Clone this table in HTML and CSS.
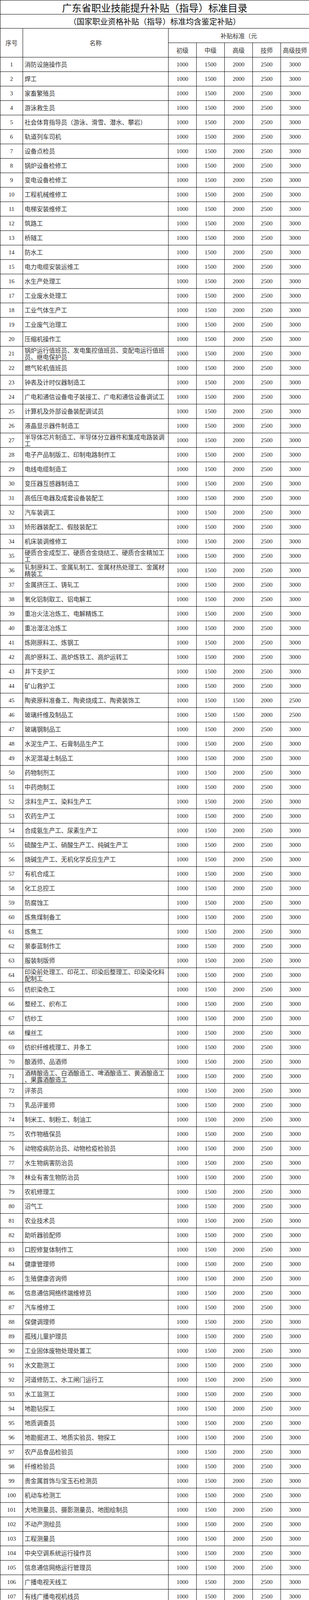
FILE: index.html
```html
<!DOCTYPE html>
<html lang="zh-CN">
<head>
<meta charset="utf-8">
<meta name="viewport" content="width=792, initial-scale=1">
<title>广东省职业技能提升补贴（指导）标准目录</title>
<link rel="stylesheet" href="styles.css">
</head>
<body>
<table class="sheet">
<colgroup><col class="c-no"><col class="c-name"><col class="c-v"><col class="c-v"><col class="c-v"><col class="c-v"><col class="c-last"></colgroup>
<tr class="title"><td colspan="7">广东省职业技能提升补贴（指导）标准目录</td></tr>
<tr class="subtitle"><td colspan="7">（国家职业资格补贴（指导）标准均含鉴定补贴）</td></tr>
<tr class="head"><td rowspan="2">序号</td><td rowspan="2">名称</td><td colspan="5">补贴标准（元</td></tr>
<tr class="head"><td>初级</td><td>中级</td><td>高级</td><td>技师</td><td>高级技师</td></tr>
<tr><td>1</td><td class="n">消防设施操作员</td><td>1000</td><td>1500</td><td>2000</td><td>2500</td><td>3000</td></tr>
<tr><td>2</td><td class="n">焊工</td><td>1000</td><td>1500</td><td>2000</td><td>2500</td><td>3000</td></tr>
<tr><td>3</td><td class="n">家畜繁殖员</td><td>1000</td><td>1500</td><td>2000</td><td>2500</td><td>3000</td></tr>
<tr><td>4</td><td class="n">游泳救生员</td><td>1000</td><td>1500</td><td>2000</td><td>2500</td><td>3000</td></tr>
<tr><td>5</td><td class="n">社会体育指导员（游泳、滑雪、潜水、攀岩）</td><td>1000</td><td>1500</td><td>2000</td><td>2500</td><td>3000</td></tr>
<tr><td>6</td><td class="n">轨道列车司机</td><td>1000</td><td>1500</td><td>2000</td><td>2500</td><td>3000</td></tr>
<tr><td>7</td><td class="n">设备点检员</td><td>1000</td><td>1500</td><td>2000</td><td>2500</td><td>3000</td></tr>
<tr><td>8</td><td class="n">锅炉设备检修工</td><td>1000</td><td>1500</td><td>2000</td><td>2500</td><td>3000</td></tr>
<tr><td>9</td><td class="n">变电设备检修工</td><td>1000</td><td>1500</td><td>2000</td><td>2500</td><td>3000</td></tr>
<tr><td>10</td><td class="n">工程机械维修工</td><td>1000</td><td>1500</td><td>2000</td><td>2500</td><td>3000</td></tr>
<tr><td>11</td><td class="n">电梯安装维修工</td><td>1000</td><td>1500</td><td>2000</td><td>2500</td><td>3000</td></tr>
<tr><td>12</td><td class="n">筑路工</td><td>1000</td><td>1500</td><td>2000</td><td>2500</td><td>3000</td></tr>
<tr><td>13</td><td class="n">桥隧工</td><td>1000</td><td>1500</td><td>2000</td><td>2500</td><td>3000</td></tr>
<tr><td>14</td><td class="n">防水工</td><td>1000</td><td>1500</td><td>2000</td><td>2500</td><td>3000</td></tr>
<tr><td>15</td><td class="n">电力电缆安装运维工</td><td>1000</td><td>1500</td><td>2000</td><td>2500</td><td>3000</td></tr>
<tr><td>16</td><td class="n">水生产处理工</td><td>1000</td><td>1500</td><td>2000</td><td>2500</td><td>3000</td></tr>
<tr><td>17</td><td class="n">工业废水处理工</td><td>1000</td><td>1500</td><td>2000</td><td>2500</td><td>3000</td></tr>
<tr><td>18</td><td class="n">工业气体生产工</td><td>1000</td><td>1500</td><td>2000</td><td>2500</td><td>3000</td></tr>
<tr><td>19</td><td class="n">工业废气治理工</td><td>1000</td><td>1500</td><td>2000</td><td>2500</td><td>3000</td></tr>
<tr><td>20</td><td class="n">压缩机操作工</td><td>1000</td><td>1500</td><td>2000</td><td>2500</td><td>3000</td></tr>
<tr><td>21</td><td class="n">锅炉运行值班员、发电集控值班员、变配电运行值班<br>员、继电保护员</td><td>1000</td><td>1500</td><td>2000</td><td>2500</td><td>3000</td></tr>
<tr><td>22</td><td class="n">燃气轮机值班员</td><td>1000</td><td>1500</td><td>2000</td><td>2500</td><td>3000</td></tr>
<tr><td>23</td><td class="n">钟表及计时仪器制造工</td><td>1000</td><td>1500</td><td>2000</td><td>2500</td><td>3000</td></tr>
<tr><td>24</td><td class="n">广电和通信设备电子装接工、广电和通信设备调试工</td><td>1000</td><td>1500</td><td>2000</td><td>2500</td><td>3000</td></tr>
<tr><td>25</td><td class="n">计算机及外部设备装配调试员</td><td>1000</td><td>1500</td><td>2000</td><td>2500</td><td>3000</td></tr>
<tr><td>26</td><td class="n">液晶显示器件制造工</td><td>1000</td><td>1500</td><td>2000</td><td>2500</td><td>3000</td></tr>
<tr><td>27</td><td class="n">半导体芯片制造工、半导体分立器件和集成电路装调<br>工</td><td>1000</td><td>1500</td><td>2000</td><td>2500</td><td>3000</td></tr>
<tr><td>28</td><td class="n">电子产品制版工、印制电路制作工</td><td>1000</td><td>1500</td><td>2000</td><td>2500</td><td>3000</td></tr>
<tr><td>29</td><td class="n">电线电缆制造工</td><td>1000</td><td>1500</td><td>2000</td><td>2500</td><td>3000</td></tr>
<tr><td>30</td><td class="n">变压器互感器制造工</td><td>1000</td><td>1500</td><td>2000</td><td>2500</td><td>3000</td></tr>
<tr><td>31</td><td class="n">高低压电器及成套设备装配工</td><td>1000</td><td>1500</td><td>2000</td><td>2500</td><td>3000</td></tr>
<tr><td>32</td><td class="n">汽车装调工</td><td>1000</td><td>1500</td><td>2000</td><td>2500</td><td>3000</td></tr>
<tr><td>33</td><td class="n">矫形器装配工、假肢装配工</td><td>1000</td><td>1500</td><td>2000</td><td>2500</td><td>3000</td></tr>
<tr><td>34</td><td class="n">机床装调维修工</td><td>1000</td><td>1500</td><td>2000</td><td>2500</td><td>3000</td></tr>
<tr><td>35</td><td class="n">硬质合金成型工、硬质合金烧结工、硬质合金精加工<br>工</td><td>1000</td><td>1500</td><td>2000</td><td>2500</td><td>3000</td></tr>
<tr><td>36</td><td class="n">轧制原料工、金属轧制工、金属材热处理工、金属材<br>精装工</td><td>1000</td><td>1500</td><td>2000</td><td>2500</td><td>3000</td></tr>
<tr><td>37</td><td class="n">金属挤压工、铸轧工</td><td>1000</td><td>1500</td><td>2000</td><td>2500</td><td>3000</td></tr>
<tr><td>38</td><td class="n">氧化铝制取工、铝电解工</td><td>1000</td><td>1500</td><td>2000</td><td>2500</td><td>3000</td></tr>
<tr><td>39</td><td class="n">重冶火法冶炼工、电解精炼工</td><td>1000</td><td>1500</td><td>2000</td><td>2500</td><td>3000</td></tr>
<tr><td>40</td><td class="n">重冶湿法冶炼工</td><td>1000</td><td>1500</td><td>2000</td><td>2500</td><td>3000</td></tr>
<tr><td>41</td><td class="n">炼刚原料工、炼钢工</td><td>1000</td><td>1500</td><td>2000</td><td>2500</td><td>3000</td></tr>
<tr><td>42</td><td class="n">高炉原料工、高炉炼铁工、高炉运转工</td><td>1000</td><td>1500</td><td>2000</td><td>2500</td><td>3000</td></tr>
<tr><td>43</td><td class="n">井下支护工</td><td>1000</td><td>1500</td><td>2000</td><td>2500</td><td>3000</td></tr>
<tr><td>44</td><td class="n">矿山救护工</td><td>1000</td><td>1500</td><td>2000</td><td>2500</td><td>3000</td></tr>
<tr><td>45</td><td class="n">陶瓷原料准备工、陶瓷烧成工、陶瓷装饰工</td><td>1000</td><td>1500</td><td>1500</td><td>2000</td><td>2500</td></tr>
<tr><td>46</td><td class="n">玻璃纤维及制品工</td><td>1000</td><td>1500</td><td>1500</td><td>2000</td><td>2500</td></tr>
<tr><td>47</td><td class="n">玻璃钢制品工</td><td>1000</td><td>1500</td><td>2000</td><td>2500</td><td>3000</td></tr>
<tr><td>48</td><td class="n">水泥生产工、石膏制品生产工</td><td>1000</td><td>1500</td><td>2000</td><td>2500</td><td>3000</td></tr>
<tr><td>49</td><td class="n">水泥混凝土制品工</td><td>1000</td><td>1500</td><td>2000</td><td>2500</td><td>3000</td></tr>
<tr><td>50</td><td class="n">药物制剂工</td><td>1000</td><td>1500</td><td>2000</td><td>2500</td><td>3000</td></tr>
<tr><td>51</td><td class="n">中药炮制工</td><td>1000</td><td>1500</td><td>2000</td><td>2500</td><td>3000</td></tr>
<tr><td>52</td><td class="n">涂料生产工、染料生产工</td><td>1000</td><td>1500</td><td>2000</td><td>2500</td><td>3000</td></tr>
<tr><td>53</td><td class="n">农药生产工</td><td>1000</td><td>1500</td><td>2000</td><td>2500</td><td>3000</td></tr>
<tr><td>54</td><td class="n">合成氨生产工、尿素生产工</td><td>1000</td><td>1500</td><td>2000</td><td>2500</td><td>3000</td></tr>
<tr><td>55</td><td class="n">硫酸生产工、硝酸生产工、纯碱生产工</td><td>1000</td><td>1500</td><td>2000</td><td>2500</td><td>3000</td></tr>
<tr><td>56</td><td class="n">烧碱生产工、无机化学反应生产工</td><td>1000</td><td>1500</td><td>2000</td><td>2500</td><td>3000</td></tr>
<tr><td>57</td><td class="n">有机合成工</td><td>1000</td><td>1500</td><td>2000</td><td>2500</td><td>3000</td></tr>
<tr><td>58</td><td class="n">化工总控工</td><td>1000</td><td>1500</td><td>2000</td><td>2500</td><td>3000</td></tr>
<tr><td>59</td><td class="n">防腐蚀工</td><td>1000</td><td>1500</td><td>2000</td><td>2500</td><td>3000</td></tr>
<tr><td>60</td><td class="n">炼焦煤制备工</td><td>1000</td><td>1500</td><td>2000</td><td>2500</td><td>3000</td></tr>
<tr><td>61</td><td class="n">炼焦工</td><td>1000</td><td>1500</td><td>2000</td><td>2500</td><td>3000</td></tr>
<tr><td>62</td><td class="n">景泰蓝制作工</td><td>1000</td><td>1500</td><td>2000</td><td>2500</td><td>3000</td></tr>
<tr><td>63</td><td class="n">服装制版师</td><td>1000</td><td>1500</td><td>2000</td><td>2500</td><td>3000</td></tr>
<tr><td>64</td><td class="n">印染前处理工、印花工、印染后整理工、印染染化料<br>配制工</td><td>1000</td><td>1500</td><td>2000</td><td>2500</td><td>3000</td></tr>
<tr><td>65</td><td class="n">纺织染色工</td><td>1000</td><td>1500</td><td>2000</td><td>2500</td><td>3000</td></tr>
<tr><td>66</td><td class="n">整经工、织布工</td><td>1000</td><td>1500</td><td>2000</td><td>2500</td><td>3000</td></tr>
<tr><td>67</td><td class="n">纺纱工</td><td>1000</td><td>1500</td><td>2000</td><td>2500</td><td>3000</td></tr>
<tr><td>68</td><td class="n">缫丝工</td><td>1000</td><td>1500</td><td>2000</td><td>2500</td><td>3000</td></tr>
<tr><td>69</td><td class="n">纺织纤维梳理工、并条工</td><td>1000</td><td>1500</td><td>2000</td><td>2500</td><td>3000</td></tr>
<tr><td>70</td><td class="n">酿酒师、品酒师</td><td>1000</td><td>1500</td><td>2000</td><td>2500</td><td>3000</td></tr>
<tr><td>71</td><td class="n">酒精酿造工、白酒酿造工、啤酒酿造工、黄酒酿造工<br>、果露酒酿造工</td><td>1000</td><td>1500</td><td>2000</td><td>2500</td><td>3000</td></tr>
<tr><td>72</td><td class="n">评茶员</td><td>1000</td><td>1500</td><td>2000</td><td>2500</td><td>3000</td></tr>
<tr><td>73</td><td class="n">乳品评鉴师</td><td>1000</td><td>1500</td><td>2000</td><td>2500</td><td>3000</td></tr>
<tr><td>74</td><td class="n">制米工、制粉工、制油工</td><td>1000</td><td>1500</td><td>2000</td><td>2500</td><td>3000</td></tr>
<tr><td>75</td><td class="n">农作物植保员</td><td>1000</td><td>1500</td><td>2000</td><td>2500</td><td>3000</td></tr>
<tr><td>76</td><td class="n">动物疫病防治员、动物检疫检验员</td><td>1000</td><td>1500</td><td>2000</td><td>2500</td><td>3000</td></tr>
<tr><td>77</td><td class="n">水生物病害防治员</td><td>1000</td><td>1500</td><td>2000</td><td>2500</td><td>3000</td></tr>
<tr><td>78</td><td class="n">林业有害生物防治员</td><td>1000</td><td>1500</td><td>2000</td><td>2500</td><td>3000</td></tr>
<tr><td>79</td><td class="n">农机修理工</td><td>1000</td><td>1500</td><td>2000</td><td>2500</td><td>3000</td></tr>
<tr><td>80</td><td class="n">沼气工</td><td>1000</td><td>1500</td><td>2000</td><td>2500</td><td>3000</td></tr>
<tr><td>81</td><td class="n">农业技术员</td><td>1000</td><td>1500</td><td>2000</td><td>2500</td><td>3000</td></tr>
<tr><td>82</td><td class="n">助听器验配师</td><td>1000</td><td>1500</td><td>2000</td><td>2500</td><td>3000</td></tr>
<tr><td>83</td><td class="n">口腔修复体制作工</td><td>1000</td><td>1500</td><td>2000</td><td>2500</td><td>3000</td></tr>
<tr><td>84</td><td class="n">健康管理师</td><td>1000</td><td>1500</td><td>2000</td><td>2500</td><td>3000</td></tr>
<tr><td>85</td><td class="n">生殖健康咨询师</td><td>1000</td><td>1500</td><td>2000</td><td>2500</td><td>3000</td></tr>
<tr><td>86</td><td class="n">信息通信网络终端维修员</td><td>1000</td><td>1500</td><td>2000</td><td>2500</td><td>3000</td></tr>
<tr><td>87</td><td class="n">汽车维修工</td><td>1000</td><td>1500</td><td>2000</td><td>2500</td><td>3000</td></tr>
<tr><td>88</td><td class="n">保健调理师</td><td>1000</td><td>1500</td><td>2000</td><td>2500</td><td>3000</td></tr>
<tr><td>89</td><td class="n">孤残儿童护理员</td><td>1000</td><td>1500</td><td>2000</td><td>2500</td><td>3000</td></tr>
<tr><td>90</td><td class="n">工业固体废物处理处置工</td><td>1000</td><td>1500</td><td>2000</td><td>2500</td><td>3000</td></tr>
<tr><td>91</td><td class="n">水文勘测工</td><td>1000</td><td>1500</td><td>2000</td><td>2500</td><td>3000</td></tr>
<tr><td>92</td><td class="n">河道修防工、水工闸门运行工</td><td>1000</td><td>1500</td><td>2000</td><td>2500</td><td>3000</td></tr>
<tr><td>93</td><td class="n">水工监测工</td><td>1000</td><td>1500</td><td>2000</td><td>2500</td><td>3000</td></tr>
<tr><td>94</td><td class="n">地勘钻探工</td><td>1000</td><td>1500</td><td>2000</td><td>2500</td><td>3000</td></tr>
<tr><td>95</td><td class="n">地质调查员</td><td>1000</td><td>1500</td><td>2000</td><td>2500</td><td>3000</td></tr>
<tr><td>96</td><td class="n">地勘掘进工、地质实验员、物探工</td><td>1000</td><td>1500</td><td>2000</td><td>2500</td><td>3000</td></tr>
<tr><td>97</td><td class="n">农产品食品检验员</td><td>1000</td><td>1500</td><td>2000</td><td>2500</td><td>3000</td></tr>
<tr><td>98</td><td class="n">纤维检验员</td><td>1000</td><td>1500</td><td>2000</td><td>2500</td><td>3000</td></tr>
<tr><td>99</td><td class="n">贵金属首饰与宝玉石检测员</td><td>1000</td><td>1500</td><td>2000</td><td>2500</td><td>3000</td></tr>
<tr><td>100</td><td class="n">机动车检测工</td><td>1000</td><td>1500</td><td>2000</td><td>2500</td><td>3000</td></tr>
<tr><td>101</td><td class="n">大地测量员、摄影测量员、地图绘制员</td><td>1000</td><td>1500</td><td>2000</td><td>2500</td><td>3000</td></tr>
<tr><td>102</td><td class="n">不动产测绘员</td><td>1000</td><td>1500</td><td>2000</td><td>2500</td><td>3000</td></tr>
<tr><td>103</td><td class="n">工程测量员</td><td>1000</td><td>1500</td><td>2000</td><td>2500</td><td>3000</td></tr>
<tr><td>104</td><td class="n">中央空调系统运行操作员</td><td>1000</td><td>1500</td><td>2000</td><td>2500</td><td>3000</td></tr>
<tr><td>105</td><td class="n">信息通信网络运行管理员</td><td>1000</td><td>1500</td><td>2000</td><td>2500</td><td>3000</td></tr>
<tr><td>106</td><td class="n">广播电视天线工</td><td>1000</td><td>1500</td><td>2000</td><td>2500</td><td>3000</td></tr>
<tr><td>107</td><td class="n">有线广播电视机线员</td><td>1000</td><td>1500</td><td>2000</td><td>2500</td><td>3000</td></tr>
<tr><td>108</td><td class="n">信息通信网络机务员</td><td>1000</td><td>1500</td><td>2000</td><td>2500</td><td>3000</td></tr>
<tr><td>109</td><td class="n">信息通信网络线务员</td><td>1000</td><td>1500</td><td>2000</td><td>2500</td><td>3000</td></tr>
<tr><td>110</td><td class="n">（粮油）仓储管理员</td><td>1000</td><td>1500</td><td>2000</td><td>2500</td><td>3000</td></tr>
<tr><td>111</td><td class="n">民航乘务员</td><td>1000</td><td>1500</td><td>2000</td><td>2500</td><td>3000</td></tr>
<tr><td>112</td><td class="n">机场运行指挥员</td><td>1000</td><td>1500</td><td>2000</td><td>2500</td><td>3000</td></tr>
<tr><td>113</td><td class="n">机动车驾驶教练员</td><td>1000</td><td>1500</td><td>2000</td><td>2500</td><td>3000</td></tr>
<tr><td>114</td><td class="n">消防员</td><td>1000</td><td>1500</td><td>2000</td><td>2500</td><td>3000</td></tr>
<tr><td>115</td><td class="n">森林消防员</td><td>1000</td><td>1500</td><td>2000</td><td>2500</td><td>3000</td></tr>
<tr><td>116</td><td class="n">应急救援员</td><td>1000</td><td>1500</td><td>2000</td><td>2500</td><td>3000</td></tr>
<tr><td>117</td><td class="n">电工</td><td>2200</td><td>2200</td><td>2800</td><td>3000</td><td>3000</td></tr>
<tr><td>118</td><td class="n">起重装卸机械操作工</td><td>2200</td><td>2200</td><td>2800</td><td>3000</td><td>3000</td></tr>
<tr><td>119</td><td class="n">制冷空调系统安装维修工</td><td>1200</td><td>1200</td><td>1600</td><td>2000</td><td>2000</td></tr>
<tr><td>120</td><td class="n">砌筑工、混凝土工、钢筋工、架子工</td><td>1000</td><td>1500</td><td>2000</td><td>2500</td><td>2500</td></tr>
<tr><td>121</td><td class="n">锅炉操作工</td><td>1000</td><td>1000</td><td>1200</td><td>1500</td><td>1500</td></tr>
<tr><td>122</td><td class="n">模具工</td><td>2200</td><td>2200</td><td>2800</td><td>3000</td><td>3000</td></tr>
<tr><td>123</td><td class="n">铸造工、锻造工、金属热处理工</td><td>2200</td><td>2200</td><td>2800</td><td>3000</td><td>3000</td></tr>
<tr><td>124</td><td class="n">车工、铣工</td><td>2200</td><td>2200</td><td>2800</td><td>3000</td><td>3000</td></tr>
<tr><td>125</td><td class="n">钳工、磨工、冲压工</td><td>1600</td><td>1600</td><td>2200</td><td>2500</td><td>2500</td></tr>
<tr><td>126</td><td class="n">电切削工</td><td>1600</td><td>1600</td><td>2200</td><td>2500</td><td>2500</td></tr>
<tr><td>127</td><td class="n">制冷工</td><td>1000</td><td>1000</td><td>1200</td><td>1500</td><td>1500</td></tr>
<tr><td>128</td><td class="n">手工木工</td><td>1600</td><td>1600</td><td>2200</td><td>2500</td><td>2500</td></tr>
<tr><td>129</td><td class="n">眼镜验光员、眼镜定配工</td><td>1200</td><td>1200</td><td>1600</td><td>2000</td><td>2000</td></tr>
<tr><td>130</td><td class="n">美容师</td><td>2200</td><td>2200</td><td>2800</td><td>3000</td><td>3000</td></tr>
<tr><td>131</td><td class="n">美发师</td><td>2200</td><td>2200</td><td>2800</td><td>3000</td><td>3000</td></tr>
<tr><td>132</td><td class="n">育婴员</td><td>1600</td><td>1600</td><td>2200</td><td></td><td></td></tr>
<tr><td>133</td><td class="n">保育员</td><td>1600</td><td>1600</td><td>2200</td><td>2500</td><td>2500</td></tr>
<tr><td>134</td><td class="n">有害生物防制员</td><td>1000</td><td>1500</td><td>2000</td><td>2500</td><td>3000</td></tr>
<tr><td>135</td><td class="n">保安员</td><td>1200</td><td>1200</td><td>1600</td><td>2000</td><td>2000</td></tr>
<tr><td>136</td><td class="n">安检员</td><td>1000</td><td>1500</td><td>2000</td><td>2500</td><td>3000</td></tr>
<tr><td>137</td><td class="n">智能楼宇管理员</td><td>2200</td><td>2200</td><td>2800</td><td>3000</td><td>3000</td></tr>
<tr><td>138</td><td class="n">安全评价师</td><td>1000</td><td>1500</td><td>2000</td><td>2500</td><td>3000</td></tr>
<tr><td>139</td><td class="n">劳动关系协调员</td><td>1000</td><td>1000</td><td>1200</td><td>1500</td><td>1500</td></tr>
<tr><td>140</td><td class="n">企业人力资源管理师</td><td>1200</td><td>1200</td><td>1600</td><td>2000</td><td>2000</td></tr>
<tr><td>141</td><td class="n">中式烹调师</td><td>1600</td><td>1600</td><td>2200</td><td>2500</td><td>3000</td></tr>
<tr><td>142</td><td class="n">中式面点师、西式烹调师、西式面点师</td><td>1600</td><td>1600</td><td>2200</td><td>2500</td><td>2500</td></tr>
<tr><td>143</td><td class="n">茶艺师</td><td>1600</td><td>1600</td><td>2200</td><td>2500</td><td>2500</td></tr>
<tr class="note"><td colspan="7">注：国家职业资格补贴（指导）标准均含鉴定补贴。</td></tr>
</table>
</body>
</html>
```
FILE: styles.css
```css
html {
  -webkit-text-size-adjust: 100%;
  text-size-adjust: 100%;
}

html, body {
  margin: 0;
  padding: 0;
  background: #ffffff;
}

.sheet {
  border-collapse: collapse;
  table-layout: fixed;
  width: 792px;
  font-family: "Liberation Serif", "Noto Sans CJK SC", serif;
  font-size: 15px;
  color: #1a1a1a;
}

.c-no { width: 58px; }
.c-name { width: 373px; }
.c-v { width: 72px; }
.c-last { width: 73px; }

.sheet tr {
  height: 37px;
}

.sheet td {
  box-sizing: border-box;
  height: 37px;
  border: 1px solid #000;
  padding: 0;
  text-align: center;
  vertical-align: middle;
  line-height: 17px;
  white-space: nowrap;
}

.sheet .title,
.sheet .subtitle,
.sheet .title td,
.sheet .subtitle td {
  height: 36px;
}

.sheet .title td {
  font-family: "Noto Sans CJK SC", sans-serif;
  font-size: 25px;
  line-height: 28px;
  color: #111;
}

.sheet .subtitle td {
  font-family: "Noto Sans CJK SC", sans-serif;
  font-size: 20px;
  line-height: 24px;
  color: #111;
}

.sheet .head td {
  font-family: "Noto Sans CJK SC", sans-serif;
  font-size: 15.6px;
  color: #333;
}

.sheet td.n {
  text-align: left;
  padding-left: 4px;
  font-family: "Noto Sans CJK SC", sans-serif;
  font-size: 15.6px;
  line-height: 17.5px;
  color: #333;
}

.sheet .note,
.sheet .note td {
  height: 18px;
}

.sheet .note td {
  text-align: left;
  padding-left: 4px;
  font-family: "Noto Sans CJK SC", sans-serif;
  font-size: 15.6px;
  line-height: 16px;
  color: #333;
}
```
